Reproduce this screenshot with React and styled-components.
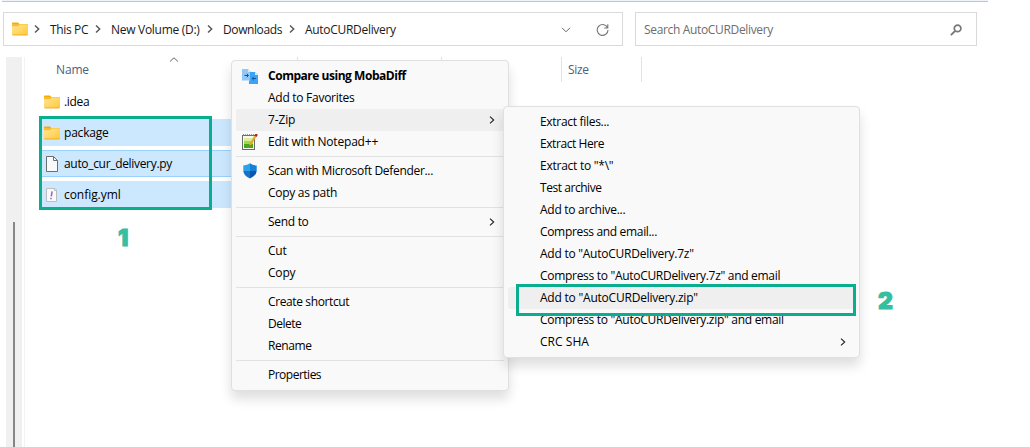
import React from "react";
import styled, { createGlobalStyle } from "styled-components";

const Global = createGlobalStyle`
  * { box-sizing: border-box; }
  body { margin: 0; background: #fff; font-family: "Open Sans", "Noto Sans", sans-serif; font-size: 12px; color: #1a1a1a; }
`;
const Page = styled.div`
  position: relative; width: 1030px; height: 447px; overflow: hidden;
  display: flex; flex-direction: column; background: #fff;
`;
const TopEdge = styled.div`
  width: 986px; height: 2px; margin-left: 2px; flex: none;
  background: #eef4f9; border-bottom: 1px solid #b9c8d4;
`;
const Toolbar = styled.div`
  display: flex; gap: 12px; padding: 10px 0 0 3px; height: 55px; flex: none;
`;
const Field = styled.div`
  display: flex; align-items: center; width: ${(p) => p.$w}px; height: 34px; border: 1px solid #d9d9d9;
`;
const Txt = styled.span`
  display: block; white-space: pre; line-height: 16px; padding-top: 2px; letter-spacing: ${(p) => p.$ls ?? -0.3}px;
`;
const FileName = styled(Txt)` padding-top: 1px; `;
const ItemLabel = styled(Txt)` padding-top: 0; `;
const Crumb = styled.div`
  display: flex; align-items: center; width: ${(p) => p.$w}px; flex: none;
`;
const CrumbArrow = styled.div`
  width: 16px; display: flex; flex: none;
`;
const FieldIcon = styled.div`
  display: flex; margin-left: ${(p) => p.$ml}px;
`;
const SearchText = styled(Txt)`
  color: #6d6d6d; margin-left: 8px; width: 306px;
`;
const Body = styled.div` display: flex; flex: 1; `;
const Gutter = styled.div`
  margin-left: 6px; width: 16px; background: #f0f0f0; padding: 165px 0 0 7px;
`;
const Thumb = styled.div` width: 2px; height: 100%; background: #868686; `;
const Pane = styled.div`
  margin-left: 2px; border-left: 1px solid #f3f3f3; flex: 1;
`;
const Header = styled.div`
  display: flex; height: 25px; color: #4c607a; position: relative;
`;
const Column = styled.div`
  width: ${(p) => p.$w}px; padding: 3px 0 0 ${(p) => p.$pad ?? 6}px; border-right: 1px solid #e2e2e2;
`;
const SortMark = styled.svg` position: absolute; left: 144px; top: 0; `;
const Files = styled.div`
  display: flex; flex-direction: column; gap: 4px; padding: 6px 0 0 15px; width: 400px;
`;
const FileRow = styled.div`
  display: flex; align-items: center; height: 27px; padding-left: 4px; color: #000;
  background: ${(p) => (p.$selected ? "#cce8ff" : "transparent")};
  border-style: solid; border-width: 1px 0;
  border-color: ${(p) => (p.$focus ? "#99d1ff" : "transparent")};
`;
const FileIcon = styled.div` width: 20px; display: flex; align-items: center; `;
const Menu = styled.div`
  position: absolute; left: ${(p) => p.$x}px; top: ${(p) => p.$y}px; width: ${(p) => p.$w}px;
  padding: 4px; border: 1px solid #e0e0e0; border-radius: 4px; background: #f9f9f9;
  box-shadow: 0 8px 12px rgba(0, 0, 0, 0.13);
`;
const Item = styled.div`
  display: flex; align-items: center; height: 22px; border-radius: 3px; color: #000;
  background: ${(p) => (p.$hover ? "#efefef" : "transparent")};
  font-weight: ${(p) => (p.$bold ? 700 : 400)};
`;
const Slot = styled.div` width: 32px; padding-left: 6px; display: flex; flex: none; `;
const Arrow = styled.div` margin-left: auto; padding-right: 9px; display: flex; `;
const Rule = styled.div` height: 1px; margin: 3px 0; background: #e2e2e2; `;
const Outline = styled.div`
  position: absolute; left: ${(p) => p.$x}px; top: ${(p) => p.$y}px;
  width: ${(p) => p.$w}px; height: ${(p) => p.$h}px; border: 3px solid #0aae8e;
`;
const Step = styled.div`
  position: absolute; left: ${(p) => p.$x}px; top: ${(p) => p.$y}px;
  font: 900 23px/24px Inter, sans-serif; color: #34bfa2; -webkit-text-stroke: 1px #34bfa2;
`;

const Folder = () => (
  <svg width="16" height="14" viewBox="0 0 16 14">
    <defs>
      <linearGradient id="fold" x1="0" y1="0" x2="1" y2="1">
        <stop offset="0" stopColor="#ffe69a" /><stop offset="1" stopColor="#ffc936" />
      </linearGradient>
    </defs>
    <path d="M0 5V1.5Q0 .5 1 .5H5.5Q6.3.5 7 1.3V3H0Z" fill="#f5ab0c" />
    <path d="M0 5V2H15Q16 2 16 3V5Z" fill="#f9bd2c" />
    <path d="M0 4.2H6L8 2.4H15Q16 2.4 16 3.4V12Q16 13 15 13H1Q0 13 0 12Z" fill="url(#fold)" />
    <path d="M.3 12.5Q.6 13 1 13H15Q15.5 13 15.8 12.5" fill="none" stroke="#eda91c" strokeWidth=".9" />
  </svg>
);
const BlankFile = () => (
  <svg width="16" height="16" viewBox="0 0 16 16">
    <path d="M2.5.5H9.5L13.5 4.5V15.5H2.5Z" fill="#fafafa" stroke="#6d6d6d" />
    <path d="M9.5.5V4.5H13.5" fill="none" stroke="#6d6d6d" />
  </svg>
);
const Yml = () => (
  <svg width="16" height="16" viewBox="0 0 16 16">
    <path d="M2.5 1.5H11L12.5 3V14.5H2.5Z" fill="#fafafa" stroke="#bdbdbd" />
    <path d="M10.5 1.5V3.5H12.5" fill="none" stroke="#bdbdbd" />
    <path d="M8.1 4.4L7.3 9.4M7 10.8V12.2" stroke="#9a6bbf" strokeWidth="1.6" />
  </svg>
);
const Chevron = ({ color = "#222", weight = 1.1 }) => (
  <svg width="6" height="8" viewBox="0 0 6 8">
    <path d="M1 .6L4.7 4L1 7.4" fill="none" stroke={color} strokeWidth={weight} />
  </svg>
);
const Diff = () => (
  <svg width="16" height="16" viewBox="0 0 16 16">
    <path d="M0 1H6L9 4V12.5H0Z" fill="#90c9f9" />
    <path d="M8 4H13L16 7V16H7V12.5H8Z" fill="#3fa3f5" />
    <path d="M6 1V4H9ZM13 4V7H16Z" fill="#d3eafc" />
    <path d="M2.5 7.5H6M4.8 5.8L6.5 7.5L4.8 9.2M14 10.5H10.5M11.8 8.8L10.1 10.5L11.8 12.2" fill="none" stroke="#14519c" />
  </svg>
);
const Notepad = () => (
  <svg width="16" height="16" viewBox="0 0 16 16">
    <rect x=".5" y="1.5" width="12" height="14" fill="#f7f7f2" stroke="#6a6a6a" />
    <path d="M2 4H11V9H2Z" fill="#d9efa0" /><path d="M2 7H11V10H2Z" fill="#a4d84a" /><path d="M2 10H11V14H2Z" fill="#4ba51e" />
    <path d="M1 1H12" stroke="#777" strokeWidth="1.6" strokeDasharray="1 1" />
    <path d="M13.3 2.2L8 11" stroke="#e9a52c" strokeWidth="2.2" />
    <path d="M14.8 0L13.4 2.2" stroke="#a62a24" strokeWidth="2.6" />
  </svg>
);
const Shield = () => (
  <svg width="16" height="16" viewBox="0 0 16 16">
    <path d="M8 .3Q5.5 2.3 1.3 2.5V8H8Z" fill="#2ba3ea" />
    <path d="M8 .3Q10.5 2.3 14.7 2.5V8H8Z" fill="#1480d6" />
    <path d="M1.3 8Q1.6 12.5 8 15.6V8Z" fill="#1474cc" />
    <path d="M14.7 8Q14.4 12.5 8 15.6V8Z" fill="#0d55a8" />
  </svg>
);

const mainItems = [
  { t: "Compare using MobaDiff", ls: -0.47, bold: true, icon: <Diff /> },
  { t: "Add to Favorites", ls: -0.27 },
  { t: "7-Zip", ls: -0.15, hover: true, arrow: true },
  { t: "Edit with Notepad++", ls: -0.2, icon: <Notepad /> },
  null,
  { t: "Scan with Microsoft Defender...", ls: -0.31, icon: <Shield /> },
  { t: "Copy as path", ls: -0.28 },
  null,
  { t: "Send to", ls: -0.3, arrow: true },
  null,
  { t: "Cut", ls: -0.2 },
  { t: "Copy", ls: -0.2 },
  null,
  { t: "Create shortcut", ls: -0.38 },
  { t: "Delete", ls: -0.48 },
  { t: "Rename", ls: -0.4 },
  null,
  { t: "Properties", ls: -0.5 },
];
const zipItems = [
  { t: "Extract files...", ls: -0.3 },
  { t: "Extract Here", ls: -0.42 },
  { t: 'Extract to "*\\"', ls: -0.25 },
  { t: "Test archive", ls: -0.45 },
  { t: "Add to archive...", ls: -0.27 },
  { t: "Compress and email...", ls: -0.33 },
  { t: 'Add to "AutoCURDelivery.7z"', ls: -0.25 },
  { t: 'Compress to "AutoCURDelivery.7z" and email', ls: -0.3 },
  { t: 'Add to "AutoCURDelivery.zip"', ls: -0.22, hover: true },
  { t: 'Compress to "AutoCURDelivery.zip" and email', ls: -0.29 },
  { t: "CRC SHA", ls: 0.05, arrow: true },
];
const crumbs = [
  { t: "This PC", w: 61, ls: -0.35 },
  { t: "New Volume (D:)", w: 112, ls: -0.29 },
  { t: "Downloads", w: 82, ls: -0.4 },
  { t: "AutoCURDelivery", w: 257, ls: -0.3 },
];

const ContextMenu = ({ items, ...pos }) => (
  <Menu {...pos}>
    {items.map((it, i) =>
      it ? (
        <Item key={i} $hover={it.hover} $bold={it.bold}>
          <Slot>{it.icon}</Slot>
          <ItemLabel $ls={it.ls}>{it.t}</ItemLabel>
          {it.arrow && <Arrow><Chevron /></Arrow>}
        </Item>
      ) : (
        <Rule key={i} />
      )
    )}
  </Menu>
);

export default function App() {
  return (
    <Page>
      <Global />
      <TopEdge />
      <Toolbar>
        <Field $w={620}>
          <FieldIcon $ml={8}><Folder /></FieldIcon>
          <FieldIcon $ml={6} />
          {crumbs.map((c) => (
            <Crumb key={c.t} $w={c.w}>
              <CrumbArrow><Chevron color="#555" weight={1.4} /></CrumbArrow>
              <Txt $ls={c.ls}>{c.t}</Txt>
            </Crumb>
          ))}
          <FieldIcon $ml={15}>
            <svg width="10" height="8" viewBox="0 -2 10 8"><path d="M1 .8L5 4.8L9 .8" fill="none" stroke="#666" /></svg>
          </FieldIcon>
          <FieldIcon $ml={25}>
            <svg width="13" height="14" viewBox="0 -1 13 14">
              <path d="M11.7 5.2A5.4 5.4 0 1 0 12 7M11.8 1.2V5H8.2" fill="none" stroke="#777" strokeWidth="1.1" />
            </svg>
          </FieldIcon>
        </Field>
        <Field $w={342}>
          <SearchText $ls={-0.34}>Search AutoCURDelivery</SearchText>
          <svg width="12" height="13" viewBox="0 -1 12 13">
            <circle cx="7.6" cy="4.4" r="3.3" fill="none" stroke="#777" strokeWidth="1.7" />
            <path d="M5.2 6.9L.9 11.2" stroke="#777" strokeWidth="1.9" />
          </svg>
        </Field>
      </Toolbar>
      <Body>
        <Gutter><Thumb /></Gutter>
        <Pane>
          <Header>
            <Column $w={273} $pad={31}><Txt $ls={-0.15}>Name</Txt></Column>
            <Column $w={144} />
            <Column $w={120} />
            <Column $w={80}><Txt $ls={-0.3}>Size</Txt></Column>
            <SortMark width="10" height="5" viewBox="0 0 10 5"><path d="M1 4.5L5 .8L9 4.5" fill="none" stroke="#666" /></SortMark>
          </Header>
          <Files>
            <FileRow><FileIcon><Folder /></FileIcon><FileName $ls={-0.3}>.idea</FileName></FileRow>
            <FileRow $selected><FileIcon><Folder /></FileIcon><FileName $ls={-0.2}>package</FileName></FileRow>
            <FileRow $selected $focus><FileIcon><BlankFile /></FileIcon><FileName $ls={-0.32}>auto_cur_delivery.py</FileName></FileRow>
            <FileRow $selected><FileIcon><Yml /></FileIcon><FileName $ls={-0.05}>config.yml</FileName></FileRow>
          </Files>
        </Pane>
      </Body>
      <ContextMenu items={mainItems} $x={231} $y={60} $w={278} />
      <ContextMenu items={zipItems} $x={503} $y={106} $w={357} />
      <Outline $x={39} $y={116} $w={173} $h={94} />
      <Outline $x={516} $y={284} $w={340} $h={32} />
      <Step $x={118} $y={226}>1</Step>
      <Step $x={878} $y={289}>2</Step>
    </Page>
  );
}
